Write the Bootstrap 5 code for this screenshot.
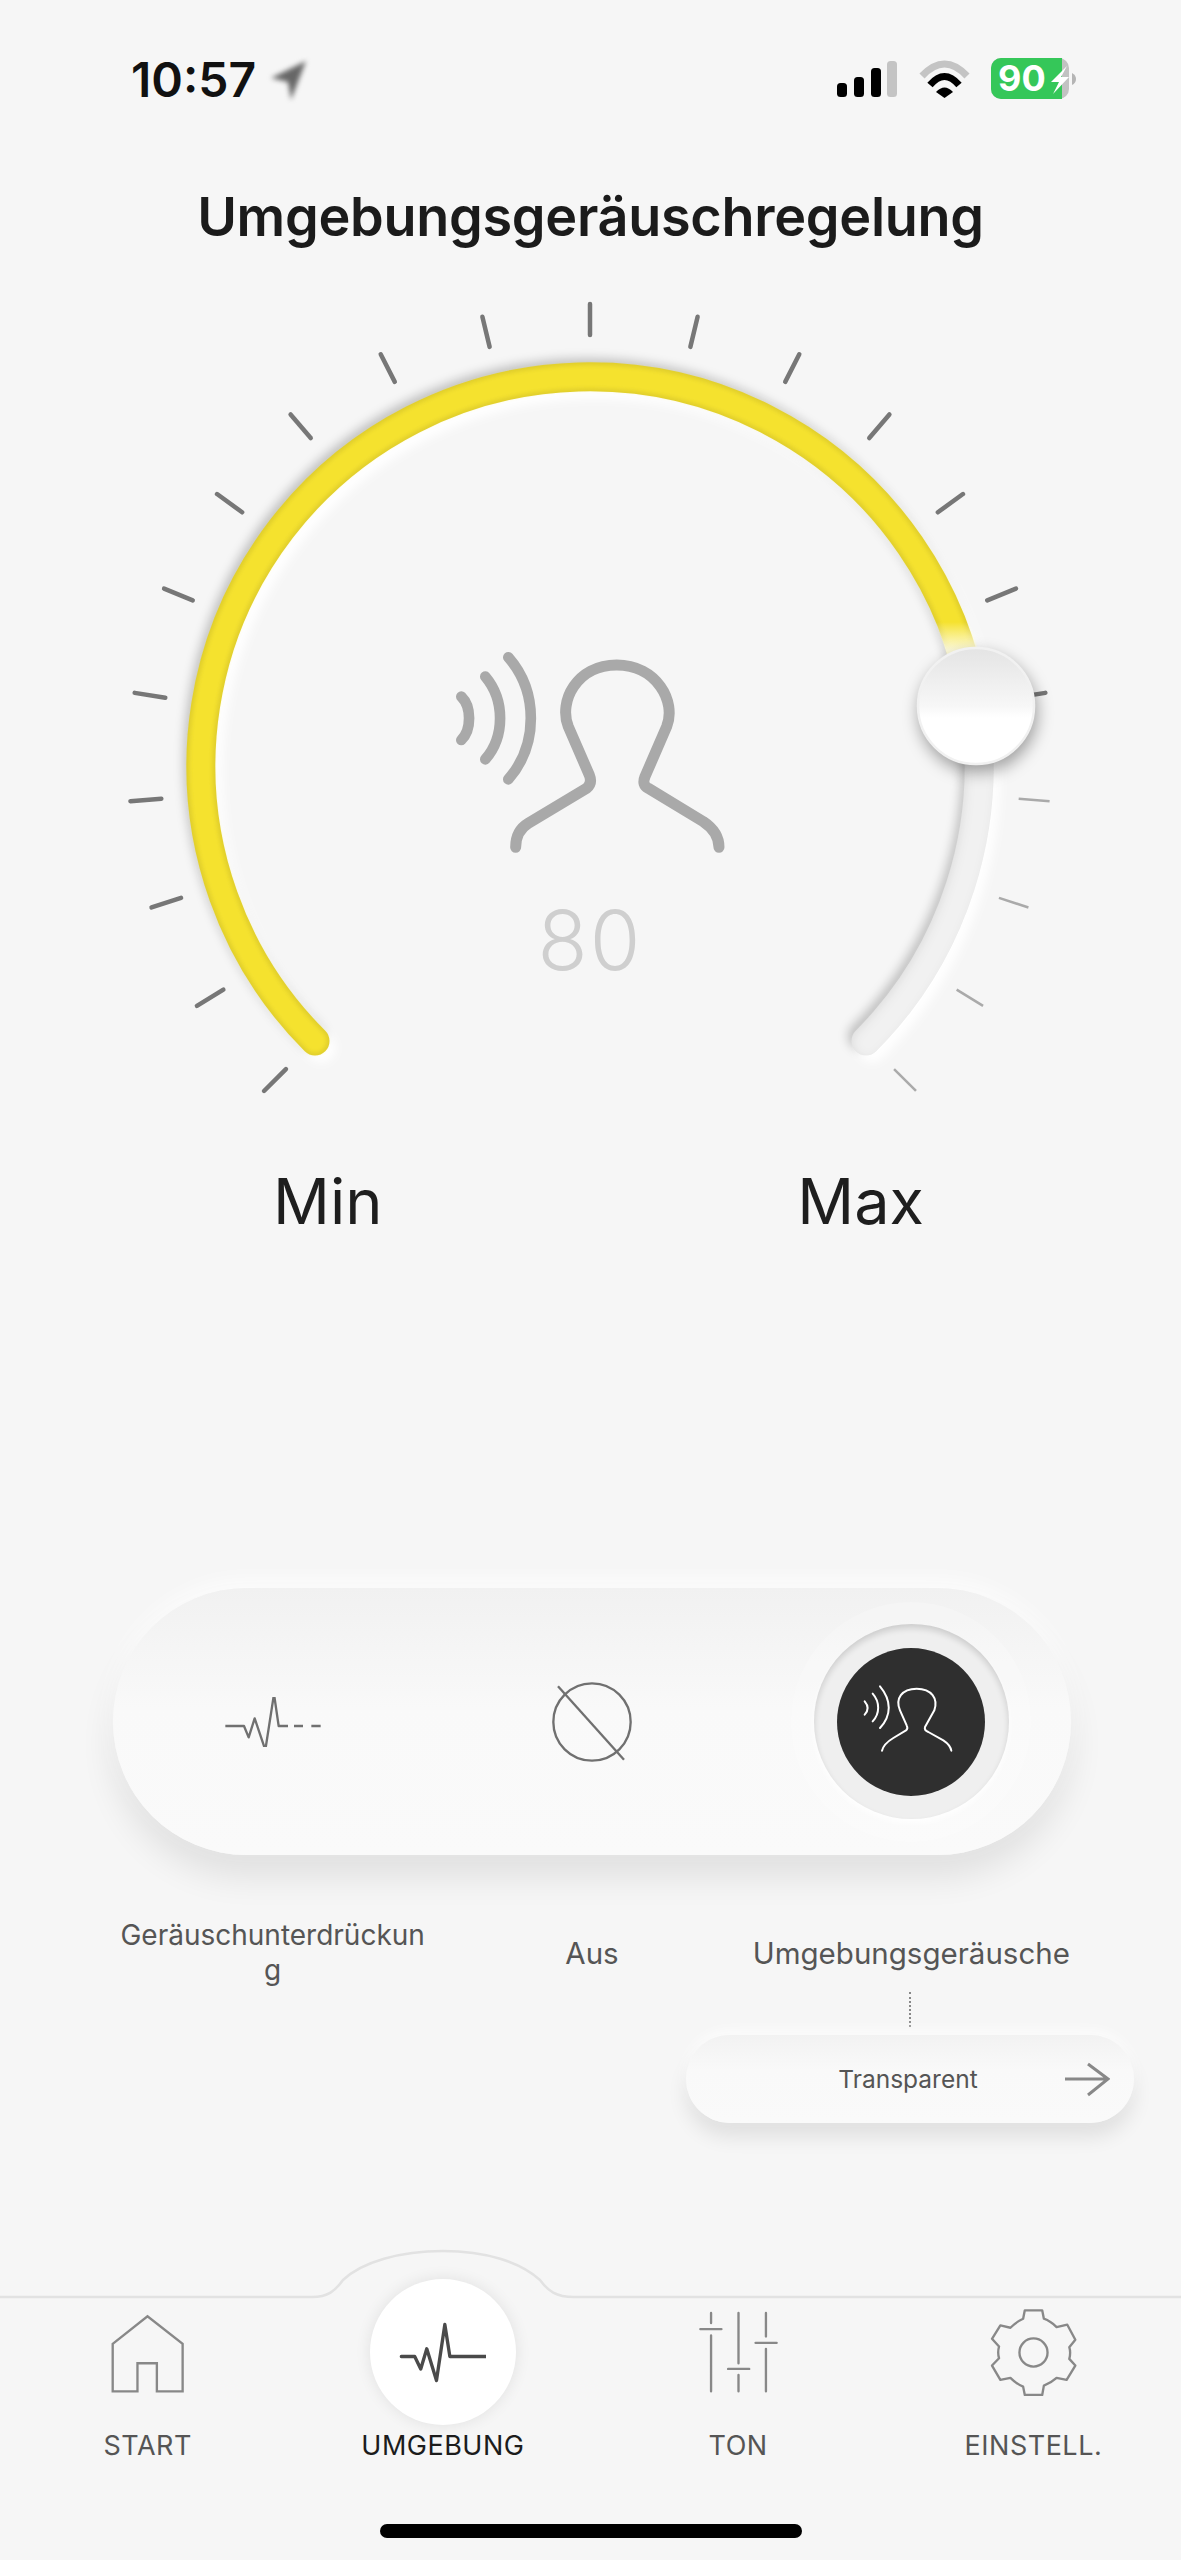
<!DOCTYPE html>
<html lang="de">
<head>
    <meta charset="UTF-8">
    <title>Umgebungsgeräuschregelung</title>
    <link href="https://cdn.jsdelivr.net/npm/bootstrap@5.3.0/dist/css/bootstrap.min.css" rel="stylesheet">
    <style>
        body { background: #f6f6f6; font-family: Inter, "Liberation Sans", sans-serif; }
        svg { display: block; }
        .screen { width: 1181px; height: 2560px; overflow: hidden; background: #f6f6f6; }

        .status-bar { height: 160px; padding: 0 104px 0 131px; }
        .status-time { font-size: 48px; font-weight: 600; color: #111; line-height: 1; }
        .loc-arrow { filter: blur(2.5px); margin-left: 11px; }

        .page-title { height: 70px; margin-top: 22px; font-size: 54px; line-height: 70px; color: #1b1b1b; letter-spacing: -.3px; }

        .dial-value { font-family: Inter, sans-serif; font-size: 82px; font-weight: 300; letter-spacing: 2px; fill: #cfcfcf; }
        .dial-thumb { filter: drop-shadow(2px 7px 8px rgba(0,0,0,.35)); }

        .range-labels { height: 80px; padding: 0 257px 0 273px; font-size: 63px; line-height: 80px; color: #1e1e1e; }

        .mode-wrap { width: 958px; margin-left: 113px; }
        .mode-pill { height: 267px; margin-top: 347px; border-radius: 134px; background: linear-gradient(#f1f1f1, #f9f9f9 45%, #fafafa);
            box-shadow: 0 22px 34px rgba(0,0,0,.09), 0 -6px 22px rgba(255,255,255,.9); }
        .sel-halo { width: 240px; height: 240px; background: rgba(255,255,255,.22); }
        .sel-ring { width: 195px; height: 195px; background: #efefef; box-shadow: inset 0 4px 6px rgba(0,0,0,.14), 0 4px 6px rgba(255,255,255,.9); }
        .sel-dark { width: 148px; height: 148px; background: radial-gradient(circle, #2f2f2f 72%, #434343); }
        .mode-labels { height: 70px; margin-top: 63px; font-size: 29.5px; line-height: 35px; color: #555; }
        .label-fit { font-size: 28px; }

        .transp-col { width: 448px; margin: 4px 47px 0 auto; }
        .dot-line { height: 35px; margin-bottom: 8px; border-left: 2px dotted #888; }
        .transp-chip { height: 88px; padding: 0 24px 0 67px; border-radius: 44px; font-size: 24.5px; color: #555;
            background: linear-gradient(#f2f2f2, #f9f9f9 40%, #fafafa); box-shadow: 0 14px 20px rgba(0,0,0,.09), 0 -4px 14px rgba(255,255,255,.8); }

        .tab-icon { height: 146px; margin-top: -20px; }
        .tab-on { width: 146px; height: 146px; background: #fff; box-shadow: 0 0 16px rgba(0,0,0,.09); }
        .tab-text { height: 30px; margin-top: 6px; font-size: 27px; line-height: 30px; color: #555; letter-spacing: .5px; }
        .tab-text.is-active { color: #1c1c1c; }
        .home-bar { width: 422px; height: 14px; margin: 63px auto 22px; background: #000; }
    </style>
</head>
<body>

<div class="screen d-flex flex-column">

    <!-- Statusleiste -->
    <div class="status-bar d-flex align-items-center justify-content-between">
        <div class="d-flex align-items-center">
            <span class="status-time">10:57</span>
            <svg class="loc-arrow" width="42" height="46" viewBox="267 58 42 46"><path d="M306 62 L271 79 L288 83 L291 101 Z" fill="#666"/></svg>
        </div>
        <svg width="240" height="58" viewBox="838 51 240 58">
            <rect x="838" y="83" width="10" height="14" rx="3.5" fill="#000"/>
            <rect x="855" y="77" width="10" height="20" rx="3.5" fill="#000"/>
            <rect x="872" y="68" width="10" height="29" rx="3.5" fill="#000"/>
            <rect x="888" y="61" width="10" height="36" rx="3.5" fill="#c4c4c4"/>
            <path d="M923 76 Q945.5 52 968 76" fill="none" stroke="#c4c4c4" stroke-width="7"/>
            <path d="M931 85 Q945.5 68 960 85" fill="none" stroke="#000" stroke-width="7"/>
            <path d="M937 92 Q945.5 83 954 92 L945.5 98 Z" fill="#000"/>
            <rect x="992" y="58" width="78" height="41" rx="10" fill="#c2c2c2"/>
            <path d="M1002 58 H1063 V99 H1002 A10 10 0 0 1 992 89 V68 A10 10 0 0 1 1002 58 Z" fill="#35c759"/>
            <path d="M1073 73 q4 2 4 6 t-4 6 Z" fill="#b5b5b5"/>
            <text x="999" y="91" font-family="Inter, sans-serif" font-size="36" font-weight="700" fill="#fff">90</text>
            <path d="M1068 66 L1052 82 H1060 L1054 94 L1070 77 H1062 Z" fill="#fff"/>
        </svg>
    </div>

    <h1 class="page-title text-center fw-semibold mb-0">Umgebungsgeräuschregelung</h1>

    <!-- Regler -->
    <svg width="1181" height="909" viewBox="0 252 1181 909">
        <defs>
            <filter id="blur5" x="-10%" y="-10%" width="120%" height="120%"><feGaussianBlur stdDeviation="5"/></filter>
            <filter id="blur2" x="-10%" y="-10%" width="120%" height="120%"><feGaussianBlur stdDeviation="2"/></filter>
            <filter id="groove" x="-40%" y="-20%" width="180%" height="140%">
                <feComponentTransfer in="SourceAlpha" result="inv"><feFuncA type="table" tableValues="1 0"/></feComponentTransfer>
                <feGaussianBlur in="inv" stdDeviation="4"/>
                <feOffset dx="2" dy="2" result="off"/>
                <feFlood flood-color="#000" flood-opacity=".16"/>
                <feComposite in2="off" operator="in"/>
                <feComposite in2="SourceAlpha" operator="in" result="sh"/>
                <feMerge><feMergeNode in="SourceGraphic"/><feMergeNode in="sh"/></feMerge>
            </filter>
            <linearGradient id="arcFade" gradientUnits="userSpaceOnUse" x1="0" y1="622" x2="0" y2="650">
                <stop offset="0" stop-color="#fff" stop-opacity="0"/>
                <stop offset="1" stop-color="#fdfbe0" stop-opacity=".95"/>
            </linearGradient>
            <linearGradient id="thumbFill" x1="0" y1="0" x2="0" y2="1">
                <stop offset="0" stop-color="#e4e4e4"/>
                <stop offset=".5" stop-color="#f7f7f7"/>
                <stop offset=".6" stop-color="#fff"/>
                <stop offset="1" stop-color="#fff"/>
            </linearGradient>
        </defs>

        <g id="ticks"></g>

        <path d="M315 1041 A389 389 0 1 1 866 1041" transform="translate(-4 -5)" fill="none" stroke="#000" stroke-opacity=".2" stroke-width="29" stroke-linecap="round" filter="url(#blur5)"/>
        <path d="M315 1041 A389 389 0 1 1 866 1041" transform="translate(6 7)" fill="none" stroke="#fff" stroke-width="29" stroke-linecap="round" filter="url(#blur5)"/>

        <path d="M974 704 A389 389 0 0 1 866 1041" fill="none" stroke="#f1f1f1" stroke-width="29" stroke-linecap="round" filter="url(#groove)"/>

        <path d="M315 1041 A389 389 0 1 1 974 704" fill="none" stroke="#e0ce2c" stroke-width="29" stroke-linecap="round"/>
        <path d="M315 1041 A389 389 0 1 1 974 704" fill="none" stroke="#f5e22e" stroke-width="23" stroke-linecap="round" filter="url(#blur2)"/>
        <path d="M943 600 A389 389 0 0 1 974 704" fill="none" stroke="url(#arcFade)" stroke-width="31"/>

        <circle class="dial-thumb" cx="976" cy="706" r="58" fill="url(#thumbFill)" stroke="#f1f1f1" stroke-width="2.5"/>

        <g transform="translate(420 620) scale(.3333)" fill="none" stroke="#a9a9a9" stroke-linecap="round" stroke-linejoin="round">
            <path stroke-width="33" d="M287 682 C287 650 300 625 325 610 L500 505 Q518 490 508 465 L445 320 C415 245 470 135 590 135 C710 135 770 245 740 320 L675 470 Q665 495 685 505 L850 605 C880 625 897 650 897 682"/>
            <path stroke-width="32" d="M124 230 C155 260 155 330 124 360"/>
            <path stroke-width="32" d="M196 170 C255 240 255 350 196 418"/>
            <path stroke-width="32" d="M265 112 C355 215 355 375 265 478"/>
        </g>

        <text class="dial-value" x="590" y="970" text-anchor="middle">80</text>
    </svg>

    <div class="range-labels d-flex justify-content-between">
        <span>Min</span>
        <span>Max</span>
    </div>

    <!-- Modus -->
    <div class="mode-wrap mode-pill row g-0 align-items-center">
        <div class="col-4 d-flex justify-content-center">
            <svg width="100" height="50" viewBox="65 111 300 150">
                <path d="M72 198 H128 L142 232 L160 175 L192 270 L218 102 L232 198 H260 M278 198 H305 M330 198 H358" fill="none" stroke="#707070" stroke-width="7" stroke-linejoin="round"/>
            </svg>
        </div>
        <div class="col-4 d-flex justify-content-center">
            <svg width="84" height="84" viewBox="1046 59 252 252">
                <circle cx="1172" cy="185" r="116" fill="none" stroke="#707070" stroke-width="7"/>
                <path d="M1070 78 L1268 298" stroke="#707070" stroke-width="7"/>
            </svg>
        </div>
        <div class="col-4 d-flex justify-content-center">
            <div class="sel-halo rounded-circle d-flex align-items-center justify-content-center">
                <div class="sel-ring rounded-circle d-flex align-items-center justify-content-center">
                    <div class="sel-dark rounded-circle d-flex align-items-center justify-content-center">
                        <svg width="148" height="148" viewBox="171 148 444 444" fill="none" stroke="#fff" stroke-width="6" stroke-linecap="round" stroke-linejoin="round">
                            <path d="M306 456 C310 440 320 430 340 418 L378 395 Q385 390 380 380 L360 335 C345 300 365 270 410 270 C455 270 475 300 463 335 L435 385 Q432 395 445 400 L490 425 C505 435 512 445 514 456"/>
                            <path d="M254 308 C266 322 266 335 254 348"/>
                            <path d="M278 285 C300 310 300 345 278 368"/>
                            <path d="M300 263 C335 305 335 350 300 388"/>
                        </svg>
                    </div>
                </div>
            </div>
        </div>
    </div>

    <div class="mode-wrap mode-labels row g-0 align-items-center text-center">
        <div class="col-4 label-fit">Geräuschunterdrückun<br>g</div>
        <div class="col-4">Aus</div>
        <div class="col-4 text-nowrap">Umgebungsgeräusche</div>
    </div>

    <div class="transp-col d-flex flex-column">
        <div class="dot-line align-self-center"></div>
        <div class="transp-chip d-flex align-items-center">
            <span class="flex-grow-1 text-center">Transparent</span>
            <svg width="47" height="36" viewBox="1065 2060 47 36"><path d="M1067 2078 H1110 M1090 2063 L1110 2078 L1090 2094" fill="none" stroke="#888" stroke-width="3"/></svg>
        </div>
    </div>

    <!-- Tab-Leiste -->
    <div class="mt-auto">
        <svg width="1181" height="54" viewBox="0 2245 1181 54">
            <path d="M0 2297 H312 C328 2297 335 2291 343 2280 C362 2262 400 2251 443 2251 C486 2251 520 2262 540 2280 C548 2291 556 2297 574 2297 H1181" fill="none" stroke="#e2e2e2" stroke-width="2.5"/>
        </svg>
        <div class="row g-0 text-center">
            <div class="col-3">
                <div class="tab-icon d-flex align-items-center justify-content-center">
                    <svg width="87" height="87" viewBox="132 86 260 260"><path d="M158 190 L262 108 L367 190 V332 H290 V248 H232 V332 H158 Z" fill="none" stroke="#888" stroke-width="7"/></svg>
                </div>
                <div class="tab-text">START</div>
            </div>
            <div class="col-3">
                <div class="tab-icon d-flex align-items-center justify-content-center">
                    <div class="tab-on rounded-circle d-flex align-items-center justify-content-center">
                        <svg width="87" height="87" viewBox="1015 86 260 260"><path d="M1022 228 H1062 L1080 265 L1098 205 L1127 300 L1152 132 L1167 228 H1277" fill="none" stroke="#4a4a4a" stroke-width="10" stroke-linecap="round" stroke-linejoin="round"/></svg>
                    </div>
                </div>
                <div class="tab-text is-active">UMGEBUNG</div>
            </div>
            <div class="col-3">
                <div class="tab-icon d-flex align-items-center justify-content-center">
                    <svg width="87" height="87" viewBox="106 86 260 260"><path d="M154 98 V128 M154 165 V332 M122 146 H185 M236 98 V248 M236 283 V332 M205 265 H268 M318 98 V168 M318 205 V332 M287 187 H350" fill="none" stroke="#888" stroke-width="7" stroke-linecap="round"/></svg>
                </div>
                <div class="tab-text">TON</div>
            </div>
            <div class="col-3">
                <div class="tab-icon d-flex align-items-center justify-content-center">
                    <svg width="87" height="87" viewBox="991 86 260 260" fill="none" stroke="#888" stroke-width="7" stroke-linejoin="round">
                        <path d="M1095 90 H1147 L1152 115 Q1172 122 1190 140 L1222 133 L1246 178 L1228 200 Q1233 216 1228 235 L1246 255 L1220 298 L1190 292 Q1172 308 1152 315 L1147 343 H1095 L1090 318 Q1070 310 1052 292 L1022 298 L997 255 L1018 233 Q1013 216 1018 198 L997 175 L1022 135 L1052 142 Q1070 124 1090 115 Z"/>
                        <circle cx="1121" cy="216" r="42"/>
                    </svg>
                </div>
                <div class="tab-text">EINSTELL.</div>
            </div>
        </div>
        <div class="home-bar rounded-pill"></div>
    </div>
</div>

<script src="https://cdn.jsdelivr.net/npm/bootstrap@5.3.0/dist/js/bootstrap.bundle.min.js"></script>
<script>
    // 21 Striche, 225 Grad bis -45 Grad, aktiv bis Wert 80
    const ticks = document.getElementById('ticks');
    let html = '';
    for (let i = 0; i <= 20; i++) {
        const a = (225 - i * 13.5) * Math.PI / 180;
        const on = i <= 16;
        const x1 = 590 + 430 * Math.cos(a), y1 = 765 - 430 * Math.sin(a);
        const x2 = 590 + 461 * Math.cos(a), y2 = 765 - 461 * Math.sin(a);
        html += `<line x1="${x1}" y1="${y1}" x2="${x2}" y2="${y2}" stroke="${on ? '#777' : '#aaa'}" stroke-width="${on ? 4.5 : 2.5}" stroke-linecap="${on ? 'round' : 'butt'}"/>`;
    }
    ticks.innerHTML = html;
</script>

</body>
</html>
